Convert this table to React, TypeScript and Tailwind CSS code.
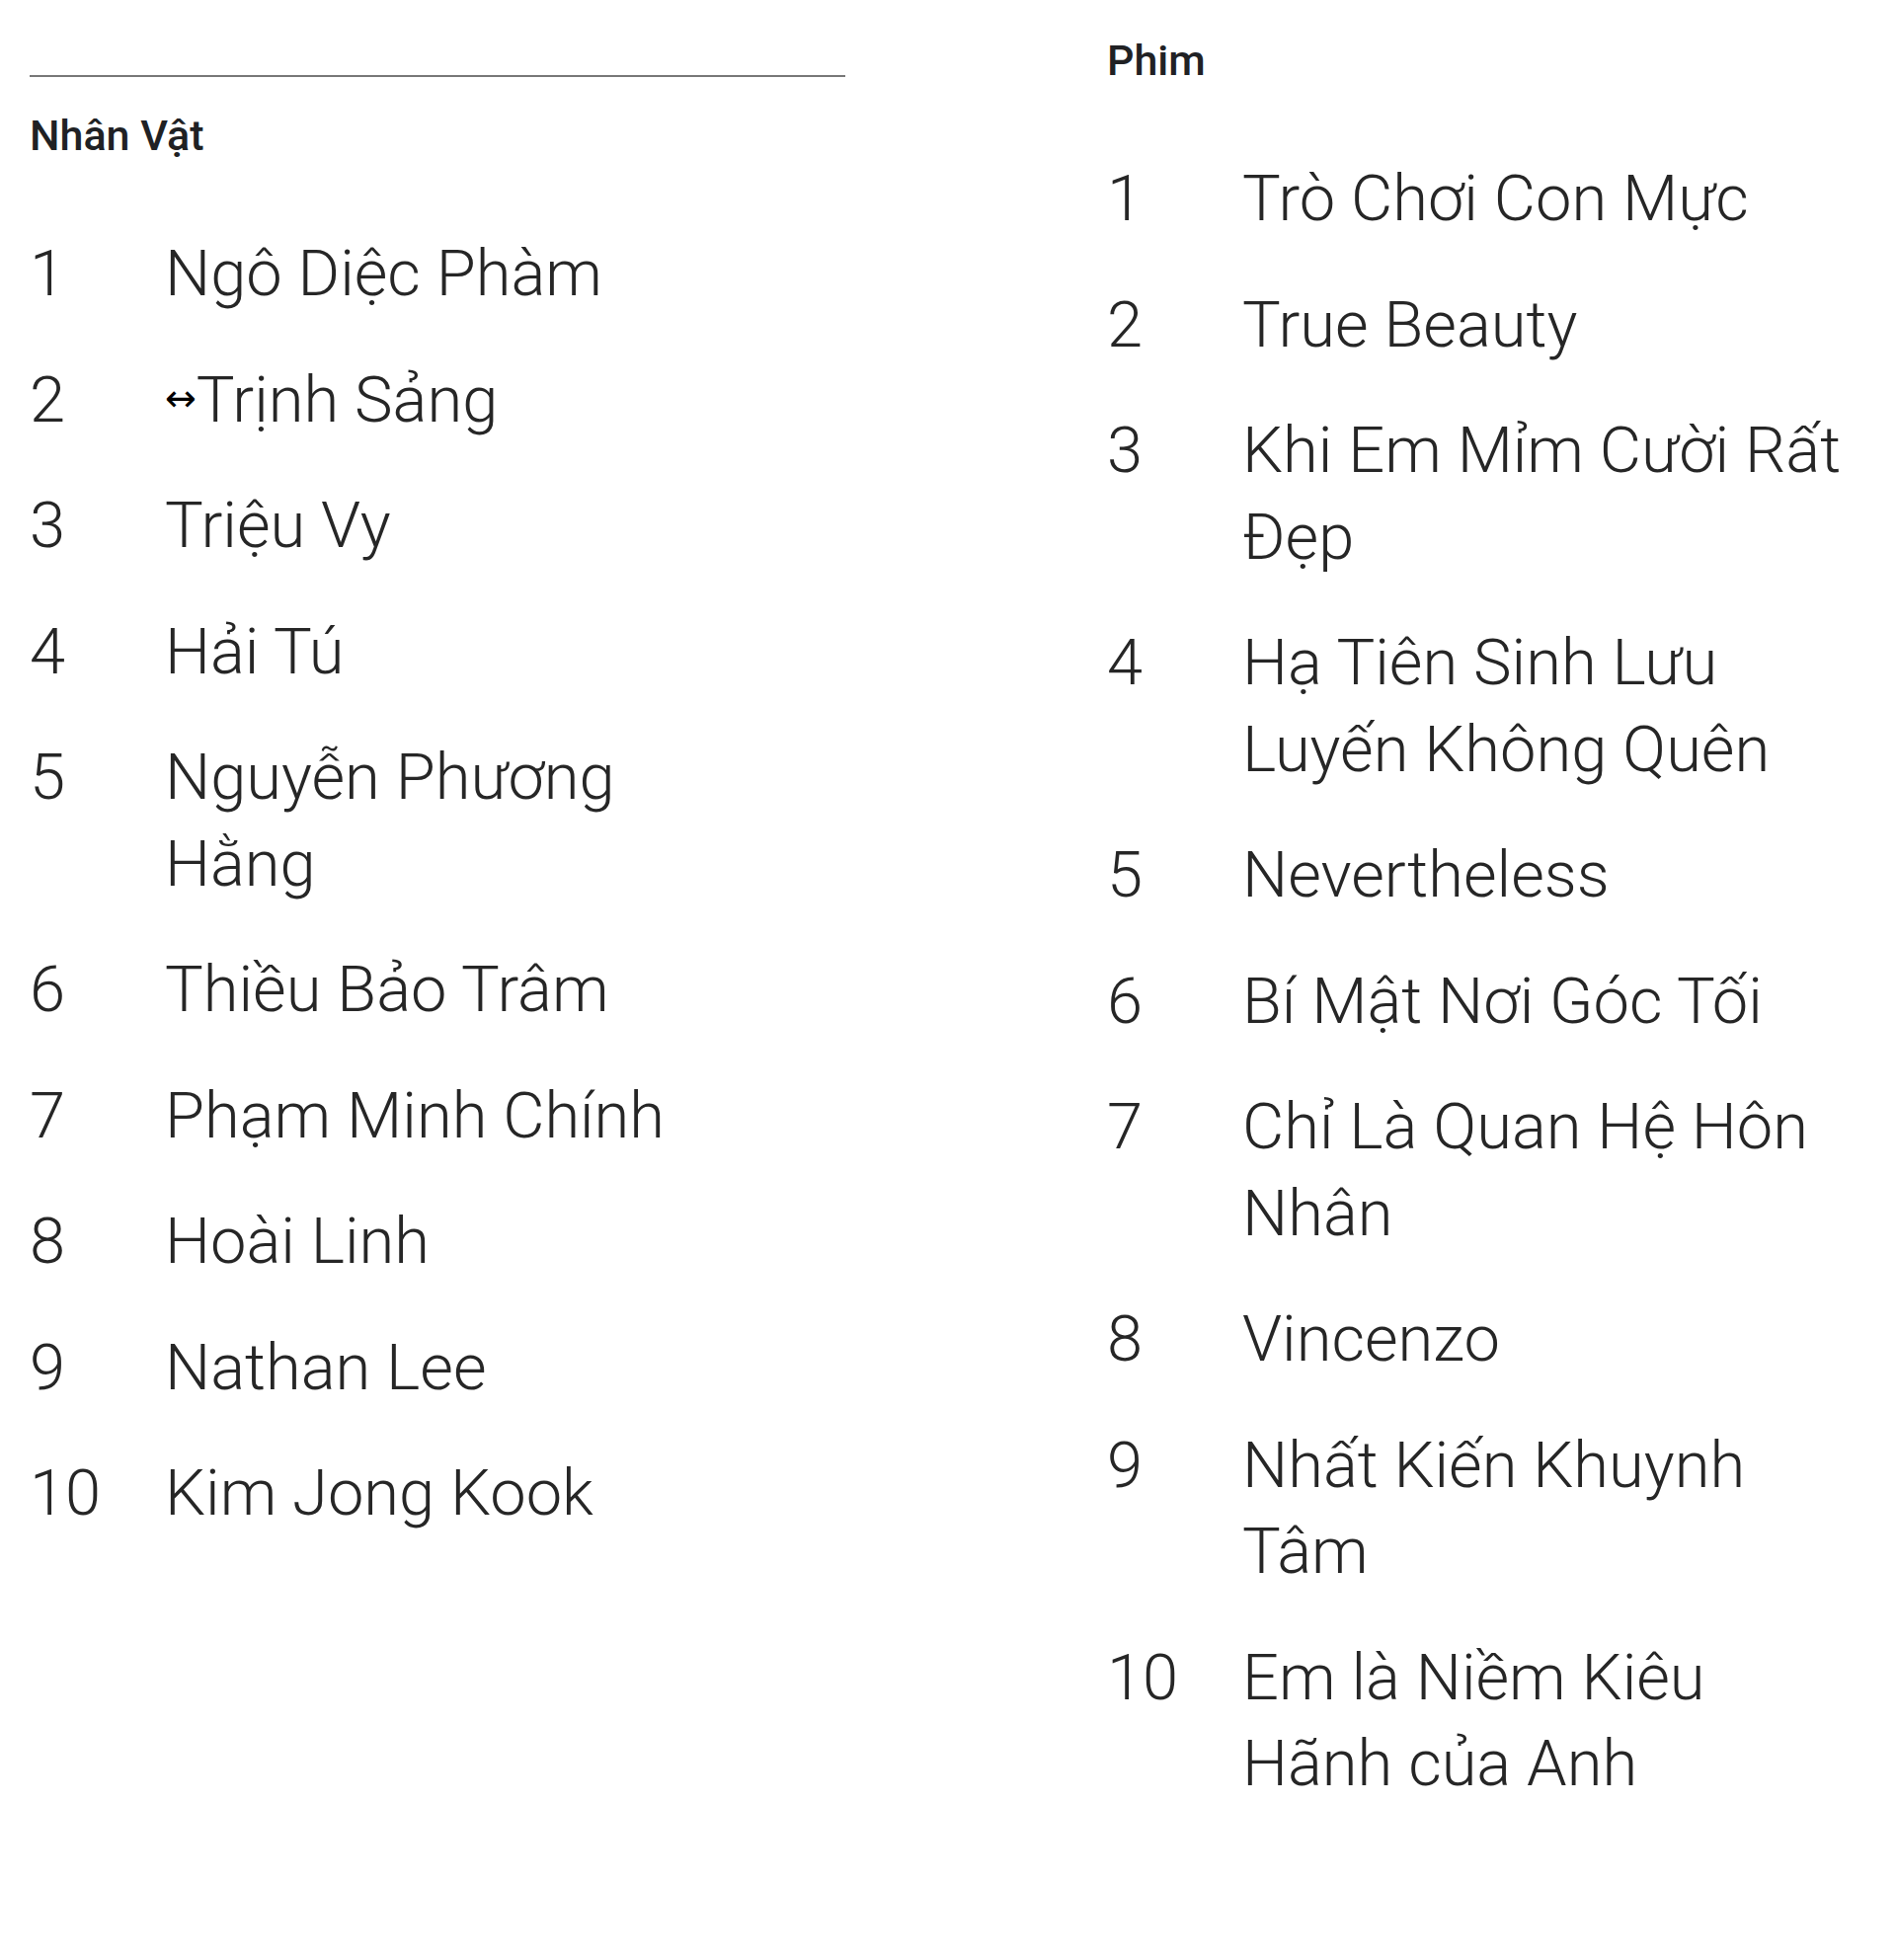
import React from "react";

type Entry = { rank: number; name: React.ReactNode };

const characters: Entry[] = [
  { rank: 1, name: "Ngô Diệc Phàm" },
  {
    rank: 2,
    name: (
      <>
        <span className="font-['DejaVu_Sans',sans-serif] text-[38px] font-normal text-black align-[11px] leading-none">
          ↔
        </span>
        Trịnh Sảng
      </>
    ),
  },
  { rank: 3, name: "Triệu Vy" },
  { rank: 4, name: "Hải Tú" },
  { rank: 5, name: "Nguyễn Phương Hằng" },
  { rank: 6, name: "Thiều Bảo Trâm" },
  { rank: 7, name: "Phạm Minh Chính" },
  { rank: 8, name: "Hoài Linh" },
  { rank: 9, name: "Nathan Lee" },
  { rank: 10, name: "Kim Jong Kook" },
];

const movies: Entry[] = [
  { rank: 1, name: "Trò Chơi Con Mực" },
  { rank: 2, name: "True Beauty" },
  { rank: 3, name: "Khi Em Mỉm Cười Rất Đẹp" },
  { rank: 4, name: "Hạ Tiên Sinh Lưu Luyến Không Quên" },
  { rank: 5, name: "Nevertheless" },
  { rank: 6, name: "Bí Mật Nơi Góc Tối" },
  { rank: 7, name: "Chỉ Là Quan Hệ Hôn Nhân" },
  { rank: 8, name: "Vincenzo" },
  { rank: 9, name: "Nhất Kiến Khuynh Tâm" },
  { rank: 10, name: "Em là Niềm Kiêu Hãnh của Anh" },
];

function RankList({ title, items }: { title: string; items: Entry[] }) {
  return (
    <div>
      <h3 className="text-[43px] leading-[64px] font-medium text-[#202124]">{title}</h3>
      <div className="mt-[45px] grid grid-cols-[137px_607px]">
        {items.map((it) => (
          <React.Fragment key={it.rank}>
            <div className="py-[20px] text-[65px] leading-[87.5px] font-light text-[#262626]">{it.rank}</div>
            <div className="py-[20px] text-[65px] leading-[87.5px] font-light text-[#262626]">{it.name}</div>
          </React.Fragment>
        ))}
      </div>
    </div>
  );
}

export default function App() {
  return (
    <div className="min-h-[1985px] w-full bg-white font-['Roboto','Liberation_Sans',sans-serif] overflow-hidden">
      <div className="flex">
        {/* left: characters */}
        <div className="ml-[30px] w-[826px] pt-[76px]">
          <div className="h-[2px] bg-[#777]" />
          <div className="mt-[27px]">
            <RankList title="Nhân Vật" items={characters} />
          </div>
        </div>

        {/* right: movies */}
        <div className="ml-[265px] pt-[29px]">
          <RankList title="Phim" items={movies} />
        </div>
      </div>
    </div>
  );
}
